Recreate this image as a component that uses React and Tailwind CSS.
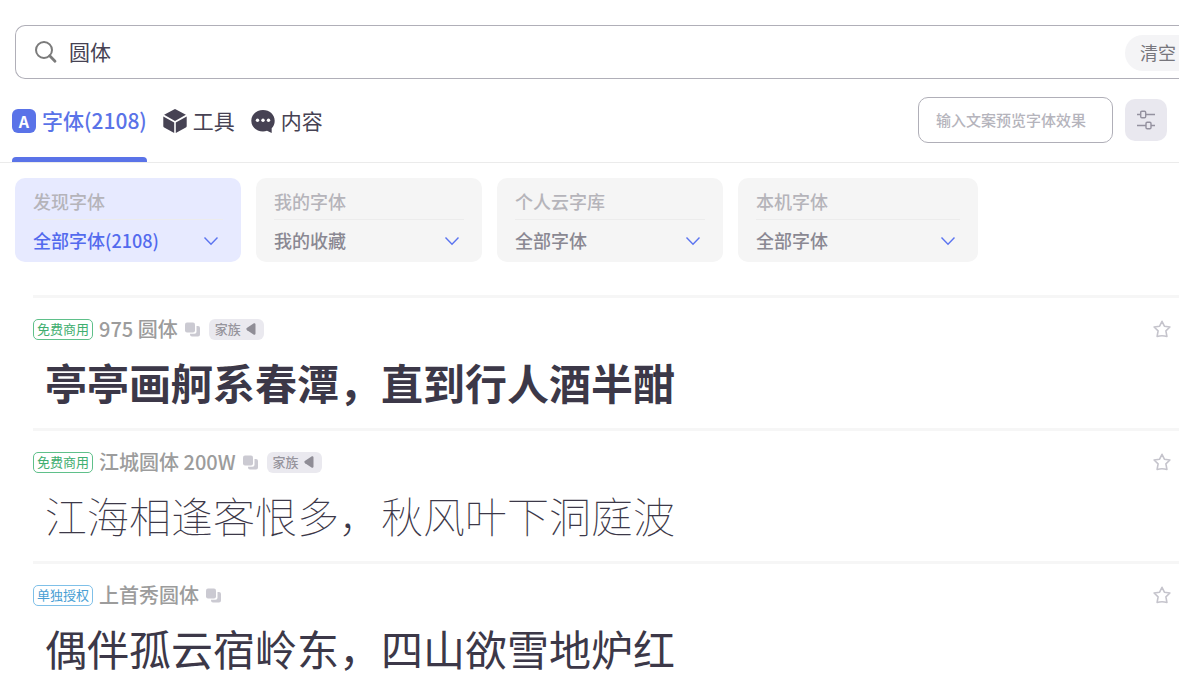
import { useState } from "react";
import clsx from "clsx";

const filters = [
  { id: "discover", title: "发现字体", options: ["全部字体(2108)"], active: true },
  { id: "mine", title: "我的字体", options: ["我的收藏"] },
  { id: "cloud", title: "个人云字库", options: ["全部字体"] },
  { id: "local", title: "本机字体", options: ["全部字体"], wide: true },
];

const fonts = [
  {
    name: "975 圆体",
    license: "免费商用",
    free: true,
    family: true,
    sample: "亭亭画舸系春潭，直到行人酒半酣",
    weight: "font-bold",
  },
  {
    name: "江城圆体 200W",
    license: "免费商用",
    free: true,
    family: true,
    sample: "江海相逢客恨多，秋风叶下洞庭波",
    weight: "font-thin",
  },
  {
    name: "上首秀圆体",
    license: "单独授权",
    free: false,
    family: false,
    sample: "偶伴孤云宿岭东，四山欲雪地炉红",
    weight: "font-normal",
  },
];

function SearchIcon() {
  return (
    <svg className="w-6 h-6 shrink-0" viewBox="0 0 24 24" fill="none" stroke="#7b7b7b">
      <circle cx="10" cy="10" r="8" strokeWidth="2" />
      <path d="M15.700 15.800l5.300 5.400" strokeWidth="2.800" strokeLinecap="round" />
    </svg>
  );
}

function CubeIcon() {
  return (
    <svg className="w-6 h-6 shrink-0" viewBox="0 0 24 24" fill="#464253">
      <path d="M11 .4a2 2 0 0 1 2 0l9.900 5.400L12 11.900 1.100 5.800z" />
      <path d="M.3 7.400l10.900 6.100V24L1.200 18.500a1.700 1.700 0 0 1-.9-1.500z" />
      <path d="M23.700 7.400l-10.900 6.100V24l10-5.500a1.700 1.700 0 0 0 .9-1.500z" />
    </svg>
  );
}

function ChatIcon() {
  return (
    <svg className="w-6 h-6 shrink-0" viewBox="0 0 24 24">
      <path
        d="M12 .9c6.600 0 11.700 4.700 11.700 10.800 0 3.100-1.100 5.700-3 7.600V24l-4.700-2.200c-1.300.5-2.600.7-4 .7C5.400 22.500.3 17.800.3 11.700S5.400.9 12 .9z"
        fill="#464253"
      />
      <circle cx="6.500" cy="11.200" r="1.700" fill="#fff" />
      <circle cx="12" cy="11.200" r="1.700" fill="#fff" />
      <circle cx="17.500" cy="11.200" r="1.700" fill="#fff" />
    </svg>
  );
}

function SlidersIcon() {
  return (
    <svg className="w-[18px] h-5" viewBox="0 0 18 20" fill="none" stroke="#94919f" strokeWidth="1.400">
      <path d="M0 4.500h3.700M8.700 4.500H18M0 15.500h9M14 15.500h4" />
      <rect x="3.700" y="1.200" width="5" height="6.600" rx="1.200" />
      <rect x="9" y="12.200" width="5" height="6.600" rx="1.200" />
    </svg>
  );
}

function CopyIcon() {
  return (
    <svg className="w-[15px] h-[15px]" viewBox="0 0 15 15" fill="#cbcad2">
      <rect x="0" y="0.500" width="10" height="10" rx="2" />
      <path d="M11.500 4H13a2 2 0 0 1 2 2v6.500a2 2 0 0 1-2 2H7a2 2 0 0 1-2-2v-.7h4.500a2 2 0 0 0 2-2z" />
    </svg>
  );
}

function StarIcon() {
  return (
    <svg className="w-[18px] h-[18px]" viewBox="0 0 18 18" fill="none" stroke="#c5c4cc" strokeWidth="1.600" strokeLinejoin="round">
      <path d="M9 1.300l2.400 4.900 5.500.8-4 3.800 1 5.600a18 18 0 0 0-9.800 0l1-5.600-4-3.800 5.500-.8z" />
    </svg>
  );
}

function FilterCard({ filter }) {
  return (
    <div
      className={clsx(
        "rounded-[10px] px-[18px] pt-1 pb-0.5",
        filter.wide ? "w-60" : "w-[226px]",
        filter.active ? "bg-[#e7eaff]" : "bg-[#f5f5f5]"
      )}
    >
      <label
        htmlFor={filter.id}
        className="block h-[38px] border-b border-[#ececec] text-lg leading-[38px] font-medium text-[#b5b4ba]"
      >
        {filter.title}
      </label>
      <div className="relative flex items-center">
        <select
          id={filter.id}
          className={clsx(
            "w-full h-10 appearance-none bg-transparent text-lg font-medium outline-none",
            filter.active ? "text-[#536aee]" : "text-[#8a8892]"
          )}
        >
          {filter.options.map((option) => (
            <option key={option}>{option}</option>
          ))}
        </select>
        <svg
          className="absolute right-1 w-4 h-4 pointer-events-none"
          viewBox="0 0 16 16"
          fill="none"
          stroke="#5b74f0"
          strokeWidth="1.400"
        >
          <path d="M1.500 5.500L8 12.200l6.500-6.700" />
        </svg>
      </div>
    </div>
  );
}

function FontRow({ font }) {
  const [starred, setStarred] = useState(false);

  return (
    <li className="border-t-3 border-[#f6f6f6] pt-[19px] pb-[18px]">
      <div className="flex items-center h-6">
        <span
          className={clsx(
            "flex items-center justify-center w-[60px] h-[21px] rounded-[5px] border text-[13px]",
            font.free ? "border-[#5fc08a] text-[#3fae70]" : "border-[#7fc0e8] text-[#4a9fd4]"
          )}
        >
          {font.license}
        </span>
        <a href="#" className="ml-1.5 text-xl leading-6 font-medium text-[#9c9c9c]">
          {font.name}
        </a>
        <button type="button" aria-label="复制" className="ml-[7px]">
          <CopyIcon />
        </button>
        {font.family && (
          <button
            type="button"
            className="flex items-center gap-[5px] ml-[9px] px-1.5 h-[21px] rounded-md bg-[#eae9ef] text-[13px] font-medium text-[#96949c]"
          >
            家族
            <svg className="w-3 h-3" viewBox="0 0 12 12" fill="#8f8d96">
              <path d="M7.500.4c.9-.6 2 0 2 1v9.200c0 1-1.100 1.600-2 1L1.100 7.200a1.500 1.500 0 0 1 0-2.400z" />
            </svg>
          </button>
        )}
        <button
          type="button"
          aria-label="收藏"
          aria-pressed={starred}
          onClick={() => setStarred(!starred)}
          className="ml-auto mr-2"
        >
          <StarIcon />
        </button>
      </div>
      <p className={clsx("mt-[13px] pl-3 text-[42px] leading-14 whitespace-nowrap text-[#3c3848]", font.weight)}>
        {font.sample}
      </p>
    </li>
  );
}

export default function App() {
  const [keyword, setKeyword] = useState("圆体");
  const [preview, setPreview] = useState("");

  return (
    <div className="min-h-screen overflow-hidden bg-white font-['Noto_Sans_CJK_SC',sans-serif]">
      {/* Search */}
      <div className="pt-[25px] pl-[15px]">
        <div className="flex items-center h-[54px] pl-[18px] rounded-l-[10px] border border-r-0 border-[#b0afb8]">
          <SearchIcon />
          <input
            type="text"
            aria-label="搜索"
            value={keyword}
            onChange={(e) => setKeyword(e.target.value)}
            className="flex-1 min-w-0 ml-[11px] h-10 pb-0.5 text-[21px] text-[#464253] outline-none"
          />
          <button
            type="button"
            onClick={() => setKeyword("")}
            className="h-9 mt-0.5 pl-[15px] pr-[3px] rounded-l-full bg-[#f4f4f6] text-lg leading-8 pb-0.5 text-[#77767c]"
          >
            清空
          </button>
        </div>
      </div>

      {/* Tabs */}
      <div className="flex justify-between h-[84px] pl-3 pr-3 border-b border-[#ebebeb]">
        <nav className="flex gap-4 text-[21px] text-[#464253]">
          <a href="#" className="flex flex-col justify-end text-[#5a73e8]">
            <span className="flex flex-1 items-center gap-1.5 pt-[5px]">
              <span className="flex items-center justify-center w-6 h-6 rounded-md bg-[#5a73e8] text-base font-bold text-white">
                A
              </span>
              <span className="font-medium">字体(2108)</span>
            </span>
            <span className="h-[5px] rounded-t bg-[#5a73e8]" />
          </a>
          <a href="#" className="flex items-center gap-1.5">
            <CubeIcon />
            工具
          </a>
          <a href="#" className="flex items-center gap-1.5">
            <ChatIcon />
            内容
          </a>
        </nav>
        <div className="flex items-center gap-3 pb-0.5">
          <input
            type="text"
            aria-label="预览文案"
            placeholder="输入文案预览字体效果"
            value={preview}
            onChange={(e) => setPreview(e.target.value)}
            className="w-[195px] h-[46px] px-[17px] rounded-[10px] border border-[#b0afb8] text-[15px] font-medium text-[#464253] placeholder:text-[#b5b4bc] outline-none"
          />
          <button
            type="button"
            aria-label="筛选"
            className="flex items-center justify-center w-[42px] h-[42px] rounded-[10px] bg-[#e9e8ef]"
          >
            <SlidersIcon />
          </button>
        </div>
      </div>

      {/* Filters */}
      <div className="flex gap-[15px] pt-[15px] pl-[15px]">
        {filters.map((filter) => (
          <FilterCard key={filter.id} filter={filter} />
        ))}
      </div>

      {/* Font list */}
      <ul className="mt-[33px] ml-[33px]">
        {fonts.map((font) => (
          <FontRow key={font.name} font={font} />
        ))}
      </ul>
    </div>
  );
}
